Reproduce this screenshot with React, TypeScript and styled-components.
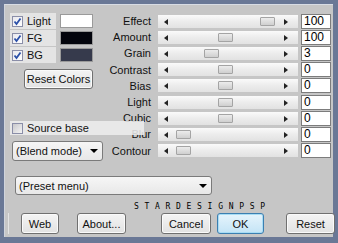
import React from 'react';
import styled, { createGlobalStyle } from 'styled-components';

const GlobalStyle = createGlobalStyle`
    html, body {
        margin: 0;
        padding: 0;
        background: #6a7896;
        font-family: 'Liberation Sans', Arial, sans-serif;
    }
`;

const Frame = styled.div`
    width: 338px;
    height: 243px;
    box-sizing: border-box;
    padding: 4px 5px 6px 4px;
    background: #6a7896;
`;

const Panel = styled.div`
    height: 100%;
    box-sizing: border-box;
    background: #c6c6c6;
    padding: 8px 0 0 5px;
    display: flex;
    flex-direction: column;
    border-top: 1px solid #d8dce4;
    border-left: 1px solid #d0d4dc;
`;

const TopArea = styled.div`
    display: flex;
    align-items: flex-start;
`;

const LeftCol = styled.div`
    width: 94px;
    flex: none;
    display: flex;
    flex-direction: column;
    position: relative;
    z-index: 1;
`;

const ColorRow = styled.div`
    display: flex;
    align-items: center;
    height: 16px;
    margin-bottom: 1px;
`;

const CheckLabel = styled.label<{ $width: number }>`
    width: ${(p) => p.$width}px;
    height: 16px;
    flex: none;
    display: flex;
    align-items: center;
    background: rgba(232, 232, 232, 0.88);
    font-size: 11px;
    color: #111;
    padding-left: 2px;
    box-sizing: border-box;
    gap: 4px;
`;

const Box = styled.span<{ $checked?: boolean }>`
    width: 11px;
    height: 11px;
    box-sizing: border-box;
    flex: none;
    border: 1px solid #8a8ea8;
    background: ${(p) => (p.$checked ? 'linear-gradient(135deg, #e8e8ee, #ffffff)' : 'linear-gradient(135deg, #c8c8cc, #f4f4f4)')};
    display: flex;
    align-items: center;
    justify-content: center;
`;

const Swatch = styled.div<{ $color: string }>`
    width: 33px;
    height: 14px;
    margin-left: 4px;
    box-sizing: border-box;
    border: 1px solid #9a9a9a;
    background: ${(p) => p.$color};
`;

const Button = styled.button<{ $primary?: boolean; $width: number }>`
    width: ${(p) => p.$width}px;
    height: 21px;
    flex: none;
    box-sizing: border-box;
    border: 1px solid ${(p) => (p.$primary ? '#3c7fb1' : '#707070')};
    border-radius: 3px;
    background: ${(p) => (p.$primary ? 'linear-gradient(#e6f4fc, #c4e4f6)' : 'linear-gradient(#f4f4f4, #e2e2e2)')};
    box-shadow: inset 0 0 0 1px ${(p) => (p.$primary ? '#a8dcf4' : '#fafafa')};
    font-family: 'Liberation Sans', Arial, sans-serif;
    font-size: 11px;
    color: #111;
    padding: 0;
`;

const ResetColors = styled(Button)`
    margin: 5px 0 0 14px;
    height: 20px;
`;

const SourceBase = styled(CheckLabel)`
    margin-top: 32px;
    height: 14px;
    background: rgba(238, 238, 238, 0.86);
`;

const Select = styled.div<{ $width: number }>`
    width: ${(p) => p.$width}px;
    height: 20px;
    box-sizing: border-box;
    border: 1px solid #7a7a7a;
    border-radius: 3px;
    background: linear-gradient(#f6f6f6, #e8e8e8);
    display: flex;
    align-items: center;
    justify-content: space-between;
    padding: 0 4px 0 3px;
    font-size: 11px;
    color: #111;
`;

const BlendSelect = styled(Select)`
    margin: 6px 0 0 2px;
`;

const Arrow = styled.span`
    width: 0;
    height: 0;
    border-left: 4px solid transparent;
    border-right: 4px solid transparent;
    border-top: 4px solid #000;
`;

const SliderList = styled.div`
    display: flex;
    flex-direction: column;
`;

const SliderRow = styled.div`
    display: flex;
    align-items: center;
    height: 16.2px;
`;

const SliderLabel = styled.span`
    width: 47px;
    text-align: right;
    font-size: 11px;
    color: #111;
    white-space: nowrap;
`;

const Track = styled.div`
    width: 140px;
    height: 13px;
    margin-left: 7px;
    position: relative;
    background: linear-gradient(#fafafa, #ececec 50%, #e2e2e2);
`;

const Tri = styled.span<{ $dir: 'left' | 'right' }>`
    position: absolute;
    top: 4px;
    ${(p) => (p.$dir === 'left' ? 'left: 6px;' : 'left: 126px;')}
    width: 0;
    height: 0;
    border-top: 3px solid transparent;
    border-bottom: 3px solid transparent;
    ${(p) => (p.$dir === 'left' ? 'border-right: 4px solid #222;' : 'border-left: 4px solid #222;')}
`;

const Thumb = styled.span`
    position: absolute;
    top: 2px;
    width: 15px;
    height: 9px;
    box-sizing: border-box;
    border: 1px solid #a4a4a4;
    border-radius: 1px;
    background: linear-gradient(#ececec, #cfcfcf);
`;

const ValueBox = styled.div`
    width: 30px;
    height: 15px;
    margin-left: 3px;
    box-sizing: border-box;
    border: 1px solid #7c7c7c;
    background: #fff;
    font-size: 12px;
    line-height: 13px;
    padding-left: 2px;
    color: #000;
`;

const PresetSelect = styled(Select)`
    margin: 15px 0 0 5px;
    height: 19px;
`;

const Signature = styled.div`
    margin: 7px 0 0 124px;
    height: 9px;
    font-family: 'DejaVu Sans Mono', monospace;
    font-size: 8px;
    line-height: 9px;
    letter-spacing: 5.7px;
    color: #000;
`;

const ButtonBar = styled.div`
    display: flex;
    align-items: center;
    margin-top: 2px;
    padding-left: 12px;
    border-left: 1px solid #e4e4e4;
    margin-left: -2px;
`;

const Spacer = styled.div<{ $w: number }>`
    width: ${(p) => p.$w}px;
    flex: none;
`;

const CheckMark = () => (
    <svg width="9" height="9" viewBox="0 0 9 9">
        <path d="M1.5 4.5 L3.5 7 L7.5 1.5" fill="none" stroke="#2a4fa8" strokeWidth="1.8" />
    </svg>
);

const colors = [
    { name: 'Light', color: '#ffffff' },
    { name: 'FG', color: '#03040c' },
    { name: 'BG', color: '#363a4c' },
];

const sliders = [
    { name: 'Effect', value: 100, pos: 102 },
    { name: 'Amount', value: 100, pos: 60 },
    { name: 'Grain', value: 3, pos: 46 },
    { name: 'Contrast', value: 0, pos: 60 },
    { name: 'Bias', value: 0, pos: 60 },
    { name: 'Light', value: 0, pos: 60 },
    { name: 'Cubic', value: 0, pos: 60 },
    { name: 'Blur', value: 0, pos: 18 },
    { name: 'Contour', value: 0, pos: 18 },
];

const App = () => {
    return (
        <>
            <GlobalStyle />
            <Frame>
                <Panel>
                    <TopArea>
                        <LeftCol>
                            {colors.map((c) => (
                                <ColorRow key={c.name}>
                                    <CheckLabel $width={46}>
                                        <Box $checked>
                                            <CheckMark />
                                        </Box>
                                        {c.name}
                                    </CheckLabel>
                                    <Swatch $color={c.color} />
                                </ColorRow>
                            ))}
                            <ResetColors $width={69}>Reset Colors</ResetColors>
                            <SourceBase $width={134}>
                                <Box />
                                Source base
                            </SourceBase>
                            <BlendSelect $width={91}>
                                (Blend mode)
                                <Arrow />
                            </BlendSelect>
                        </LeftCol>
                        <SliderList>
                            {sliders.map((s) => (
                                <SliderRow key={s.name}>
                                    <SliderLabel>{s.name}</SliderLabel>
                                    <Track>
                                        <Tri $dir="left" />
                                        <Thumb style={{ left: s.pos }} />
                                        <Tri $dir="right" />
                                    </Track>
                                    <ValueBox>{s.value}</ValueBox>
                                </SliderRow>
                            ))}
                        </SliderList>
                    </TopArea>
                    <PresetSelect $width={197}>
                        (Preset menu)
                        <Arrow />
                    </PresetSelect>
                    <Signature>STARDESIGNPSP</Signature>
                    <ButtonBar>
                        <Button $width={38}>Web</Button>
                        <Spacer $w={18} />
                        <Button $width={49}>About...</Button>
                        <Spacer $w={35} />
                        <Button $width={50}>Cancel</Button>
                        <Spacer $w={6} />
                        <Button $width={47} $primary>
                            OK
                        </Button>
                        <Spacer $w={22} />
                        <Button $width={49}>Reset</Button>
                    </ButtonBar>
                </Panel>
            </Frame>
        </>
    );
};

export default App;
